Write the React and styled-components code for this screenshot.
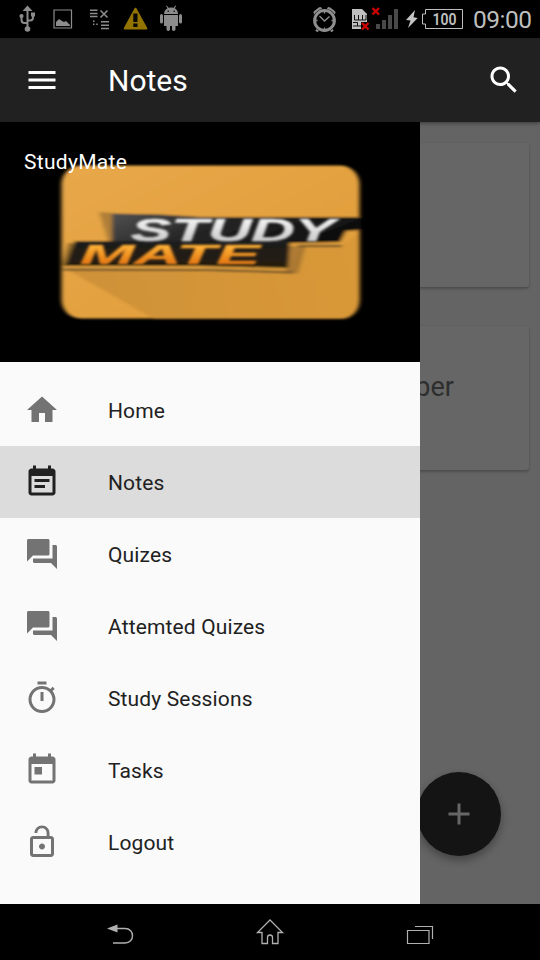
import React from "react";
import styled, { createGlobalStyle } from "styled-components";

const GlobalStyle = createGlobalStyle`
  * { box-sizing: border-box; }
  body { margin: 0; background: #000; font-family: Roboto, "Noto Sans", sans-serif; }
`;

const Screen = styled.div`
  width: 540px;
  height: 960px;
  display: flex;
  flex-direction: column;
  overflow: hidden;
  background: #000;
`;

const StatusBar = styled.header`
  height: 38px;
  flex: none;
  display: flex;
  align-items: flex-start;
  justify-content: space-between;
  padding: 0 9px 0 16px;
`;

const StatusGroup = styled.div`
  display: flex;
  height: 38px;
`;

const StatusIcon = styled.svg`
  display: block;
  flex: none;
  height: 38px;
  width: ${(p) => p.$w}px;
`;

const Clock = styled.span`
  width: 58px;
  margin-left: 9px;
  font-size: 24.5px;
  line-height: 39px;
  color: #bebebe;
  white-space: nowrap;
  letter-spacing: -0.5px;
`;

const Toolbar = styled.div`
  height: 84px;
  flex: none;
  display: flex;
  align-items: center;
  padding: 0 18px 0 24px;
  background: #212121;
  color: #fff;
  position: relative;
  z-index: 1;
  box-shadow: 0 1px 4px rgba(0, 0, 0, 0.45);
`;

const Title = styled.h1`
  flex: 1;
  margin: 0 0 0 48px;
  padding-top: 2px;
  font-size: 30px;
  font-weight: 400;
  line-height: 36px;
`;

const MaterialIcon = styled.svg`
  display: block;
  flex: none;
  width: 36px;
  height: 36px;
  fill: currentColor;
`;

const Body = styled.div`
  flex: 1;
  min-height: 0;
  position: relative;
  background: #fafafa;
`;

const CardList = styled.main`
  display: flex;
  flex-direction: column;
  gap: 39px;
  padding: 21px 11px 0;
`;

const Card = styled.article`
  height: 144px;
  display: flex;
  justify-content: flex-end;
  padding: 45px 75px 0 0;
  border-radius: 3px;
  background: #fff;
  box-shadow: 0 2px 3px rgba(0, 0, 0, 0.22), 0 0 2px rgba(0, 0, 0, 0.12);
  color: #737373;
  font-size: 27px;
  line-height: 32px;
`;

const AddButton = styled.button`
  position: absolute;
  right: 39px;
  bottom: 48px;
  width: 84px;
  height: 84px;
  display: grid;
  place-items: center;
  padding: 0;
  border: 0;
  border-radius: 50%;
  background: #333;
  color: #fff;
  box-shadow: 0 4px 10px rgba(0, 0, 0, 0.35);
`;

const Scrim = styled.div`
  position: absolute;
  inset: 0;
  background: rgba(0, 0, 0, 0.6);
`;

const Drawer = styled.nav`
  position: absolute;
  inset: 0 auto 0 0;
  width: 420px;
  background: #fafafa;
`;

const DrawerHeader = styled.div`
  height: 240px;
  display: grid;
  background: #000;
`;

const Logo = styled.svg`
  grid-area: 1 / 1;
  width: 420px;
  height: 240px;
  display: block;
`;

const AppName = styled.span`
  grid-area: 1 / 1;
  z-index: 1;
  padding: 28px 0 0 24px;
  color: #fff;
  font-size: 21px;
  line-height: 25px;
  letter-spacing: 0.3px;
`;

const Menu = styled.ul`
  list-style: none;
  margin: 0;
  padding: 12px 0 0;
`;

const MenuItem = styled.li`
  height: 72px;
  display: flex;
  align-items: center;
  gap: 48px;
  padding: 0 24px;
  background: ${(p) => (p.$active ? "#dcdcdc" : "transparent")};
  color: ${(p) => (p.$active ? "#212121" : "#737373")};
`;

const MenuLabel = styled.span`
  padding-top: 3px;
  color: #212121;
  font-size: 21px;
  line-height: 25px;
  letter-spacing: 0.14px;
`;

const NavBar = styled.footer`
  height: 56px;
  flex: none;
  display: flex;
  justify-content: space-between;
  padding: 0 100px;
`;

const NavIcon = styled.svg`
  width: 40px;
  height: 56px;
  display: block;
`;

const chat =
  "M21 6h-2v9H6v2c0 .55.45 1 1 1h11l4 4V7c0-.55-.45-1-1-1zm-4 6V3c0-.55-.45-1-1-1H3c-.55 0-1 .45-1 1v14l4-4h10c.55 0 1-.45 1-1z";

const items = [
  { label: "Home", d: "M10 20v-6h4v6h5v-8h3L12 3 2 12h3v8z" },
  {
    label: "Notes",
    active: true,
    d: "M17 10H7v2h10v-2zm2-7h-1V1h-2v2H8V1H6v2H5c-1.11 0-1.99.9-1.99 2L3 19c0 1.1.89 2 2 2h14c1.1 0 2-.9 2-2V5c0-1.1-.9-2-2-2zm0 16H5V8h14v11zm-5-5H7v2h7v-2z",
  },
  { label: "Quizes", d: chat },
  { label: "Attemted Quizes", d: chat },
  {
    label: "Study Sessions",
    d: "M15 1H9v2h6V1zm-4 13h2V8h-2v6zm8.03-6.61l1.42-1.42c-.43-.51-.9-.99-1.41-1.41l-1.42 1.42C16.07 4.74 14.12 4 12 4c-4.97 0-9 4.03-9 9s4.02 9 9 9 9-4.03 9-9c0-2.12-.74-4.07-1.97-5.61zM12 20c-3.87 0-7-3.13-7-7s3.13-7 7-7 7 3.13 7 7-3.13 7-7 7z",
  },
  {
    label: "Tasks",
    d: "M19 3h-1V1h-2v2H8V1H6v2H5c-1.11 0-1.99.9-1.99 2L3 19c0 1.1.89 2 2 2h14c1.1 0 2-.9 2-2V5c0-1.1-.9-2-2-2zm0 16H5V8h14v11zM7 10h5v5H7z",
  },
  {
    label: "Logout",
    d: "M12 17c1.1 0 2-.9 2-2s-.9-2-2-2-2 .9-2 2 .9 2 2 2zm6-9h-1V6c0-2.76-2.24-5-5-5S7 3.24 7 6h1.9c0-1.71 1.39-3.1 3.1-3.1 1.71 0 3.1 1.39 3.1 3.1v2H6c-1.1 0-2 .9-2 2v10c0 1.1.9 2 2 2h12c1.1 0 2-.9 2-2V10c0-1.1-.9-2-2-2zm0 12H6V10h12v10z",
  },
];

function Icon({ d }) {
  return (
    <MaterialIcon viewBox="0 0 24 24" aria-hidden="true">
      <path d={d} />
    </MaterialIcon>
  );
}

function Notifications() {
  return (
    <StatusGroup>
      <StatusIcon $w={29} viewBox="16 0 29 38" fill="#8c8c8c" stroke="#8c8c8c">
        <path d="M27.5 5.5l5 5.5h-10z" stroke="none" />
        <path d="M27.5 9v20M21.5 16v4q0 3 3 3h3M33 14.500v3q0 3-3 3h-2.500" fill="none" strokeWidth="2" />
        <circle cx="27.500" cy="29" r="2.800" stroke="none" />
        <circle cx="21.500" cy="16" r="2.100" stroke="none" />
        <path d="M31 12.500h4v4h-4z" stroke="none" />
      </StatusIcon>
      <StatusIcon $w={38} viewBox="45 0 38 38">
        <path d="M54 10h17.500v18H54z" fill="none" stroke="#8c8c8c" strokeWidth="1.200" />
        <path d="M56 26v-4l3-3 3 2 2 1 2-1 4 4v1z" fill="#8c8c8c" />
      </StatusIcon>
      <StatusIcon $w={33} viewBox="83 0 33 38">
        <path d="M90 10.200h7.500M90 13.400h7.500M90 16.600h7.500M101 21.800h8M101 25.200h8M101 28.500h8" stroke="#8c8c8c" strokeWidth="1.500" />
        <path d="M100.500 10.500l7 7M107.500 10.500l-7 7" stroke="#8c8c8c" strokeWidth="1.600" />
        <path d="M93 20.500h1.500V22H93zM93 23.500h1.500V25H93zM96.200 23.500h1.500V25h-1.500z" fill="#8c8c8c" />
      </StatusIcon>
      <StatusIcon $w={39} viewBox="116 0 39 38">
        <path d="M135.500 8.800L146.300 28.500H124.800z" fill="#947400" stroke="#947400" strokeWidth="2.200" strokeLinejoin="round" />
        <path d="M133.300 13.500h4.200V22h-4.200zM133.300 23.500h4.200V27h-4.200z" fill="#080700" />
      </StatusIcon>
      <StatusIcon $w={32} viewBox="155 0 32 38" fill="#8c8c8c">
        <path d="M164 14q.4-4 3.600-5.700L166 6l.8-.5 1.700 2.300q2.700-.8 5.300 0l1.600-2.300.8.500-1.500 2.300Q177.800 10 178 14z" />
        <path d="M164 15h14v11h-2.500v3.200a1.700 1.700 0 0 1-3.500 0V26h-2v3.200a1.700 1.700 0 0 1-3.500 0V26H164z" />
        <rect x="160" y="14" width="3" height="9.500" rx="1.500" />
        <rect x="179" y="14" width="3" height="9.500" rx="1.500" />
        <path d="M167.500 10.500h1.500V12h-1.500zM173.500 10.500h1.500V12h-1.500z" fill="#222" />
      </StatusIcon>
    </StatusGroup>
  );
}

function SystemStatus() {
  return (
    <StatusGroup>
      <StatusIcon $w={33} viewBox="311 0 33 38" fill="none" stroke="#8e8e8e">
        <path d="M319 28l-2.500 3.500M330 28l2.500 3.500" strokeWidth="3" />
        <path d="M315.500 12.500l4.500-3.500M333.500 12.500l-4.500-3.500" strokeWidth="4" strokeLinecap="round" />
        <circle cx="324.500" cy="20.500" r="11.800" fill="#000" stroke="none" />
        <circle cx="324.500" cy="20.500" r="9.900" strokeWidth="3" />
        <path d="M319.500 16l5 5 5-4.500M324.500 11v2.500M324.500 27.500V30M315 20.500h2.500M331.500 20.500h2.500" strokeWidth="1.300" />
      </StatusIcon>
      <StatusIcon $w={26} viewBox="344 0 26 38">
        <path d="M352 9h10l5 5v15h-15z" fill="#c0c0c0" />
        <path d="M354.500 15v5h11.500v-5M358.500 15v5M362.500 15v5M353 22.500h4.500v3.500M353 26H362" fill="none" stroke="#111" strokeWidth="1" />
        <path d="M361 22h8v8h-8z" fill="#000" />
        <path d="M362 23l6.500 6.500M368.500 23l-6.500 6.500" stroke="#ce0000" strokeWidth="2.400" />
      </StatusIcon>
      <StatusIcon $w={32} viewBox="370 0 32 38">
        <path d="M376 24h4v5h-4zM382 20h4v9h-4zM388 15h4v14h-4zM394 9h4v20h-4z" fill="#494949" />
        <path d="M372.500 8l6.500 6.500M379 8l-6.500 6.500" stroke="#ce0000" strokeWidth="2.400" />
      </StatusIcon>
      <StatusIcon $w={18} viewBox="402 0 18 38">
        <path d="M415 10l-9 10 4.500.5L408 28l9.700-10-4.200-.7z" fill="#c4c4c4" />
      </StatusIcon>
      <StatusIcon $w={44} viewBox="420 0 44 38">
        <path d="M425.500 9.500h37v19h-37v-4.500h-3v-10h3z" fill="none" stroke="#bebebe" />
        <text x="444.500" y="25" textAnchor="middle" textLength="24" lengthAdjust="spacingAndGlyphs" fontFamily="Roboto, sans-serif" fontWeight="600" fontSize="16.500" fill="#c0c0c0">100</text>
      </StatusIcon>
      <Clock>09:00</Clock>
    </StatusGroup>
  );
}

function StudyMateLogo() {
  return (
    <Logo viewBox="0 122 420 240">
      <defs>
        <linearGradient id="tile" x1="0" y1="0" x2="1" y2="1">
          <stop offset="0" stopColor="#e8a84a" />
          <stop offset="1" stopColor="#df9b37" />
        </linearGradient>
        <linearGradient id="band" x1="0" y1="0" x2="1" y2="0.3">
          <stop offset="0" stopColor="#505050" />
          <stop offset="0.5" stopColor="#242424" />
          <stop offset="1" stopColor="#101010" />
        </linearGradient>
        <linearGradient id="lowerBand" x1="0" y1="0" x2="0" y2="1">
          <stop offset="0" stopColor="#1c1c1c" />
          <stop offset="1" stopColor="#29200f" />
        </linearGradient>
        <linearGradient id="silver" x1="0" y1="0" x2="0" y2="1">
          <stop offset="0" stopColor="#fff" />
          <stop offset="1" stopColor="#bdbdbd" />
        </linearGradient>
        <linearGradient id="amber" x1="0" y1="0" x2="0" y2="1">
          <stop offset="0.2" stopColor="#ffba3c" />
          <stop offset="0.8" stopColor="#e67812" />
        </linearGradient>
        <linearGradient id="castShadow" x1="0" y1="0" x2="1" y2="0">
          <stop offset="0" stopColor="#c98d36" />
          <stop offset="1" stopColor="#d89838" />
        </linearGradient>
        <filter id="soft" x="-5%" y="-5%" width="110%" height="110%">
          <feGaussianBlur stdDeviation="2 0.900" />
        </filter>
        <filter id="softText" x="-5%" y="-10%" width="110%" height="120%">
          <feGaussianBlur stdDeviation="1.800 0.900" />
        </filter>
        <clipPath id="tileClip"><rect x="61" y="165" width="298.500" height="154" rx="18" /></clipPath>
      </defs>
      <g filter="url(#soft)">
        <rect x="61.500" y="165.500" width="298" height="153" rx="19" fill="url(#tile)" />
        <path clipPath="url(#tileClip)" d="M68 270L290 268 300 248 342 245 360 232V319H154z" fill="url(#castShadow)" opacity="0.800" />
        <path d="M99 212L113 213V241H108z" fill="#7a5a2c" opacity="0.500" />
        <path d="M286 246H306L298 274 286 271z" fill="#80592b" opacity="0.500" />
        <path d="M112 213.500L160 214.500 200 217H361V230L346 231 340 242 290 243H112z" fill="url(#band)" />
        <path d="M75 241H290L288 268 200 266H63z" fill="url(#lowerBand)" />
        <path d="M62 264L68 243H74L66 264z" fill="#926a2c" />
        <path d="M63 269.500L210 270 293 272.500" fill="none" stroke="#5e4828" strokeWidth="1.800" />
        <path d="M298 246H342" fill="none" stroke="#5e4828" strokeWidth="2" />
      </g>
      <g filter="url(#softText)" fontFamily="'Liberation Sans', Arial, sans-serif" fontWeight="700" fontStyle="italic">
        <text x="131" y="241" fontSize="31" textLength="204" lengthAdjust="spacingAndGlyphs" fill="url(#silver)" stroke="#d8d8d8" strokeWidth="0.500">STUDY</text>
        <text x="80" y="263.500" fontSize="28.500" textLength="180" lengthAdjust="spacingAndGlyphs" fill="url(#amber)" stroke="#e98b20" strokeWidth="0.500">MATE</text>
      </g>
    </Logo>
  );
}

export default function App() {
  return (
    <>
      <GlobalStyle />
      <Screen>
        <StatusBar>
          <Notifications />
          <SystemStatus />
        </StatusBar>
        <Toolbar>
          <Icon d="M3 18h18v-2H3v2zm0-5h18v-2H3v2zm0-7v2h18V6H3z" />
          <Title>Notes</Title>
          <Icon d="M15.500 14h-.79l-.28-.27C15.410 12.590 16 11.110 16 9.500 16 5.910 13.090 3 9.500 3S3 5.910 3 9.500 5.910 16 9.500 16c1.610 0 3.090-.59 4.230-1.570l.27.28v.79l5 4.990L20.490 19l-4.990-5zm-6 0C7.010 14 5 11.990 5 9.500S7.010 5 9.500 5 14 7.010 14 9.500 11.990 14 9.500 14z" />
        </Toolbar>
        <Body>
          <CardList>
            <Card />
            <Card>per</Card>
          </CardList>
          <AddButton aria-label="Add">
            <Icon d="M19 13h-6v6h-2v-6H5v-2h6V5h2v6h6v2z" />
          </AddButton>
          <Scrim />
          <Drawer>
            <DrawerHeader>
              <StudyMateLogo />
              <AppName>StudyMate</AppName>
            </DrawerHeader>
            <Menu>
              {items.map((item) => (
                <MenuItem key={item.label} $active={item.active}>
                  <Icon d={item.d} />
                  <MenuLabel>{item.label}</MenuLabel>
                </MenuItem>
              ))}
            </Menu>
          </Drawer>
        </Body>
        <NavBar>
          <NavIcon viewBox="100 904 40 56">
            <path d="M107 928.500l10.500-4v8z" fill="#b0b0b0" />
            <path d="M116 928.500h9c10 0 10 14.500 0 14.500h-12" fill="none" stroke="#b0b0b0" strokeWidth="1.400" />
          </NavIcon>
          <NavIcon viewBox="250 904 40 56">
            <path d="M270 920l12.500 12.500H278V943.500h-5.500v-6q0-2.500-2.500-2.500t-2.500 2.500v6H262V932.500h-4.500z" fill="none" stroke="#b0b0b0" strokeWidth="1.300" />
          </NavIcon>
          <NavIcon viewBox="400 904 40 56">
            <path d="M407.500 930.500h21.500v13h-21.500zM415 926.500h17.500V939" fill="none" stroke="#b0b0b0" strokeWidth="1.200" />
          </NavIcon>
        </NavBar>
      </Screen>
    </>
  );
}
